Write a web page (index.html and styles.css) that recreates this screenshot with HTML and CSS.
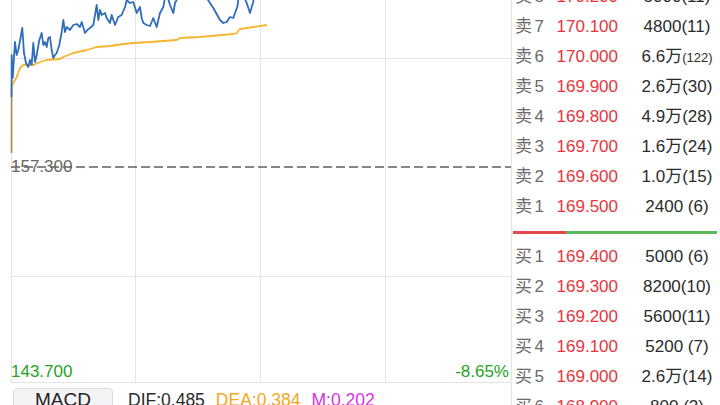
FILE: index.html
```html
<!DOCTYPE html>
<html lang="zh-CN">
<head>
    <meta charset="UTF-8">
    <meta name="viewport" content="width=device-width, initial-scale=1.0">
    <title>分时</title>
    <link rel="stylesheet" href="styles.css">
</head>
<body>
    <div class="screen">
        <!-- Intraday chart + indicator tab -->
        <div class="quote">
            <div class="chart">
                <svg class="chart-svg" width="511" height="383" viewBox="0 0 511 383">
                    <g class="grid">
                        <line x1="11.5" y1="0" x2="11.5" y2="383" />
                        <line x1="135.5" y1="0" x2="135.5" y2="383" />
                        <line x1="260.5" y1="0" x2="260.5" y2="383" />
                        <line x1="385.5" y1="0" x2="385.5" y2="383" />
                        <line x1="11" y1="58.5" x2="511" y2="58.5" />
                        <line x1="11" y1="276.5" x2="511" y2="276.5" />
                        <line x1="11" y1="382.5" x2="511" y2="382.5" />
                    </g>
                    <line class="prev-close" x1="11" y1="167" x2="511" y2="167" />
                    <!-- average price -->
                    <polyline class="avg-line" points="11.5,153 11.7,87 13.3,83 16.7,77 20,68 23.3,65 28.3,65 33.3,65 40,62 46.7,60 60,59 63.3,57 73.3,53 86.7,50 96.7,47 110,46 123.3,44 133.3,43 150,42 176.7,40 180,38 200,37 233.3,34 236.7,33 240,29 253.3,27 267,25" />
                    <line class="open-tick" x1="11.5" y1="153" x2="11.5" y2="97" />
                    <!-- last price -->
                    <polyline class="price-line" points="11.5,97 11.7,55 12.7,78 15,42 16.7,55 18.3,50 20.7,37 22.3,28 24,53 26,63 28.3,67 30,60 31.7,65 33.3,43 35,62 36.7,55 39.3,40 41.7,33 43.3,45 45,42 46.7,47 48.3,38 50,37 51.7,50 53.3,58 55,55 56.7,53 59.3,45 61.7,32 63.3,20 65,32 66.7,27 70,30 73.3,25 76.7,24 80,27 81.7,22 85,33 87.3,30 90,28 93.3,25 95,15 96.7,5 98.3,20 100,10 101.7,15 105,13 106.7,18 110,23 111.7,15 115,25 118.3,17 121.7,15 125,7 126.7,0 130,3 133.3,2 136.7,13 140,7 141.7,18 143.3,23 146.7,25 150,26 153.3,18 156.7,27 160,13 163.3,7 165,-2 167,-5 170,5 173.3,13 175,3 178.3,-3 185,-8 200,-5 206.7,-2 210,3 213.3,8 220,20 223.3,23 226.7,22 230,17 233.3,18 235,13 237.3,7 238.3,0 243,-5 246.7,3 250,13 251.7,7 253.3,2 254,-5" />
                </svg>
                <span class="axis-label prev">157.300</span>
                <span class="axis-label low">143.700</span>
                <span class="axis-label pct">-8.65%</span>
            </div>
            <div class="macd-bar">
                <div class="macd-btn">MACD</div>
                <span class="ind dif">DIF:0.485</span>
                <span class="ind dea">DEA:0.384</span>
                <span class="ind m">M:0.202</span>
            </div>
        </div>

        <!-- Order book -->
        <div class="book">
            <div class="book-list">
                <div class="row"><span class="lv">卖8</span><span class="px">170.200</span><span class="vol">5000(11)</span></div>
                <div class="row"><span class="lv">卖7</span><span class="px">170.100</span><span class="vol">4800(11)</span></div>
                <div class="row"><span class="lv">卖6</span><span class="px">170.000</span><span class="vol">6.6万<small>(122)</small></span></div>
                <div class="row"><span class="lv">卖5</span><span class="px">169.900</span><span class="vol">2.6万(30)</span></div>
                <div class="row"><span class="lv">卖4</span><span class="px">169.800</span><span class="vol">4.9万(28)</span></div>
                <div class="row"><span class="lv">卖3</span><span class="px">169.700</span><span class="vol">1.6万(24)</span></div>
                <div class="row"><span class="lv">卖2</span><span class="px">169.600</span><span class="vol">1.0万(15)</span></div>
                <div class="row"><span class="lv">卖1</span><span class="px">169.500</span><span class="vol">2400 (6)</span></div>

                <div class="ratio">
                    <div class="ratio-sell" style="width: 26%"></div>
                    <div class="ratio-buy"></div>
                </div>

                <div class="row"><span class="lv">买1</span><span class="px">169.400</span><span class="vol">5000 (6)</span></div>
                <div class="row"><span class="lv">买2</span><span class="px">169.300</span><span class="vol">8200(10)</span></div>
                <div class="row"><span class="lv">买3</span><span class="px">169.200</span><span class="vol">5600(11)</span></div>
                <div class="row"><span class="lv">买4</span><span class="px">169.100</span><span class="vol">5200 (7)</span></div>
                <div class="row"><span class="lv">买5</span><span class="px">169.000</span><span class="vol">2.6万(14)</span></div>
                <div class="row"><span class="lv">买6</span><span class="px">168.900</span><span class="vol">800 (2)</span></div>
            </div>
        </div>
    </div>
</body>
</html>
```

FILE: styles.css
```css
* {
    margin: 0;
    padding: 0;
    box-sizing: border-box;
}

body {
    font-family: 'Liberation Sans', 'Noto Sans CJK SC', sans-serif;
    background: #ffffff;
    color: #333;
    width: 720px;
    height: 405px;
    overflow: hidden;
}

.screen {
    display: flex;
    height: 405px;
}

/* ---- chart side ---- */
.quote {
    width: 511px;
    flex-shrink: 0;
    display: flex;
    flex-direction: column;
}

.chart {
    position: relative;
    height: 383px;
}

.chart-svg {
    display: block;
}

.grid line {
    stroke: #e4e4e8;
    stroke-width: 1;
}

.prev-close {
    stroke: #5f5f5f;
    stroke-width: 1.6;
    stroke-dasharray: 9 4;
}

.open-tick {
    stroke: #8a8a8a;
    stroke-width: 1.2;
}

.price-line {
    fill: none;
    stroke: #2f6dbb;
    stroke-width: 1.8;
    stroke-linejoin: round;
}

.avg-line {
    fill: none;
    stroke: #f4b531;
    stroke-width: 1.8;
    stroke-linejoin: round;
}

.axis-label {
    position: absolute;
    font-size: 17px;
    line-height: 20px;
}

.axis-label.prev {
    left: 11px;
    top: 157px;
    color: #666;
}

.axis-label.low {
    left: 11px;
    top: 362px;
    color: #25a325;
}

.axis-label.pct {
    right: 2px;
    top: 362px;
    color: #25a325;
}

.macd-bar {
    display: flex;
    align-items: flex-start;
    padding: 5px 0 0 13px;
    gap: 11px;
}

.macd-btn {
    width: 100px;
    height: 30px;
    line-height: 22px;
    text-align: center;
    font-size: 19px;
    color: #222;
    background: #f4f4f6;
    border: 1px solid #dcdcdc;
    border-radius: 4px;
    margin-right: 4px;
}

.ind {
    font-size: 17.5px;
    line-height: 22px;
    margin-top: 1px;
}

.dif { color: #2a2a2a; }
.dea { color: #f5a623; }
.m { color: #d932e0; }

/* ---- order book ---- */
.book {
    flex: 1;
    border-left: 1px solid #e2e2e6;
    overflow: hidden;
}

.book-list {
    margin-top: -18px;
}

.row {
    display: grid;
    grid-template-columns: 30px 73px 99px;
    height: 30px;
    line-height: 30px;
    padding-left: 3px;
    font-size: 17px;
    white-space: nowrap;
}

.lv {
    color: #6a6a6a;
    letter-spacing: 2.5px;
}

.px {
    color: #e8343c;
    text-align: right;
}

.vol {
    color: #2b2b2b;
    text-align: center;
    padding-left: 19px;
}

.vol small {
    font-size: 13px;
}

.ratio {
    display: flex;
    height: 3px;
    margin: 9px 3px 8px 1px;
}

.ratio-sell {
    background: #e5484d;
}

.ratio-buy {
    flex: 1;
    background: #5cb85c;
}
```
